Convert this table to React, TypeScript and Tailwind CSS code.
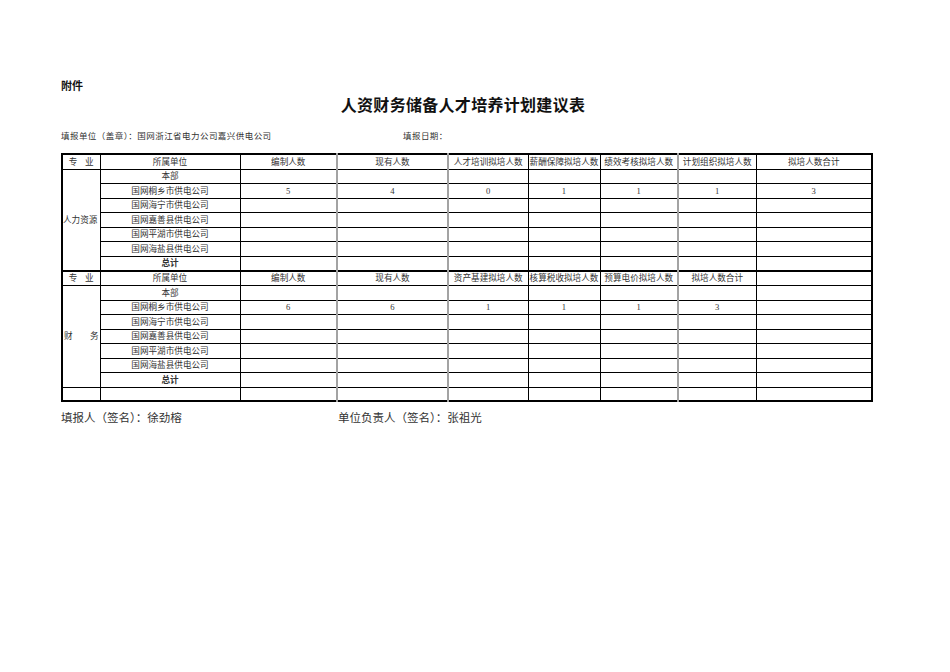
const serif = "font-['Liberation_Serif','Noto_Sans_CJK_SC',serif]";

// column widths (px) measured off the form
const widths = [38, 140, 97, 111, 80, 72, 78, 78, 116];
// columns whose left rule is drawn as a heavier grey line
const greyLeft = [3, 4, 7];

const units = [
  "本部",
  "国网桐乡市供电公司",
  "国网海宁市供电公司",
  "国网嘉善县供电公司",
  "国网平湖市供电公司",
  "国网海盐县供电公司",
];

const sections = [
  {
    name: "人力资源",
    spread: false,
    headers: [
      "编制人数",
      "现有人数",
      "人才培训拟培人数",
      "薪酬保障拟培人数",
      "绩效考核拟培人数",
      "计划组织拟培人数",
      "拟培人数合计",
    ],
    values: ["5", "4", "0", "1", "1", "1", "3"],
  },
  {
    name: "财务",
    spread: true,
    headers: [
      "编制人数",
      "现有人数",
      "资产基建拟培人数",
      "核算税收拟培人数",
      "预算电价拟培人数",
      "拟培人数合计",
      "",
    ],
    values: ["6", "6", "1", "1", "1", "3", ""],
  },
];

function cellCls(col: number) {
  return `border border-black p-0 text-center whitespace-nowrap overflow-hidden ${
    greyLeft.includes(col) ? "border-l-2 border-l-[#a3a3a3]" : ""
  }`;
}

function Blank({ from }: { from: number }) {
  return (
    <>
      {widths.slice(from).map((_, i) => (
        <td key={i} className={cellCls(from + i)} />
      ))}
    </>
  );
}

export default function App() {
  return (
    <div className={`w-[950px] h-[672px] bg-white pt-[80px] pl-[61px] text-[#111] ${serif}`}>
      <div className="w-[810px]">
        {/* ── Heading ─────────────────────────────── */}
        <p className="text-[11px] leading-[12px] font-bold h-[12px]">附件</p>
        <h1 className="mt-[5px] pr-[6px] text-center text-[16px] leading-[18px] font-bold tracking-[0.3px]">
          人资财务储备人才培养计划建议表
        </h1>

        <div className="mt-[16px] flex text-[8.5px] leading-[10px] text-[#333] tracking-[0.45px]">
          <span className="w-[342px] shrink-0">填报单位（盖章）：国网浙江省电力公司嘉兴供电公司</span>
          <span>填报日期：</span>
        </div>

        {/* ── Plan table ──────────────────────────── */}
        <table className="mt-[12px] w-[810px] table-fixed border-collapse border-2 border-black text-[8.6px] leading-[10px] text-[#333]">
          <colgroup>
            {widths.map((w, i) => (
              <col key={i} style={{ width: w }} />
            ))}
          </colgroup>
          <tbody>
            {sections.map((s, si) => (
              <SectionRows key={s.name} section={s} first={si === 0} />
            ))}
            <tr className="h-[14px]">
              <Blank from={0} />
            </tr>
          </tbody>
        </table>

        {/* ── Signatures ──────────────────────────── */}
        <div className="mt-[9px] flex text-[11.5px] leading-[14px] text-[#333]">
          <span className="w-[277px] shrink-0">填报人（签名）：徐劲榕</span>
          <span>单位负责人（签名）：张祖光</span>
        </div>
      </div>
    </div>
  );
}

function SectionRows({
  section,
  first,
}: {
  section: (typeof sections)[number];
  first: boolean;
}) {
  const top = first ? "" : "[&>td]:border-t-2 [&>td]:border-t-black";
  return (
    <>
      <tr className={`h-[15px] ${top}`}>
        <td className={cellCls(0)}>
          <div className="flex justify-around px-[2px]">
            <span>专</span>
            <span>业</span>
          </div>
        </td>
        <td className={cellCls(1)}>所属单位</td>
        {section.headers.map((h, i) => (
          <td key={i} className={cellCls(i + 2)}>
            {h}
          </td>
        ))}
      </tr>

      {units.map((u, ui) => (
        <tr key={u} className="h-[14.5px]">
          {ui === 0 && (
            <td rowSpan={7} className={`${cellCls(0)} text-left`}>
              {section.spread ? (
                <div className="flex justify-between px-[1px]">
                  <span>财</span>
                  <span>务</span>
                </div>
              ) : (
                <span>{section.name}</span>
              )}
            </td>
          )}
          <td className={cellCls(1)}>{u}</td>
          {ui === 1 ? (
            section.values.map((v, i) => (
              <td key={i} className={cellCls(i + 2)}>
                {v}
              </td>
            ))
          ) : (
            <Blank from={2} />
          )}
        </tr>
      ))}

      <tr className="h-[14.5px]">
        <td className={`${cellCls(1)} font-bold`}>总计</td>
        <Blank from={2} />
      </tr>
    </>
  );
}
